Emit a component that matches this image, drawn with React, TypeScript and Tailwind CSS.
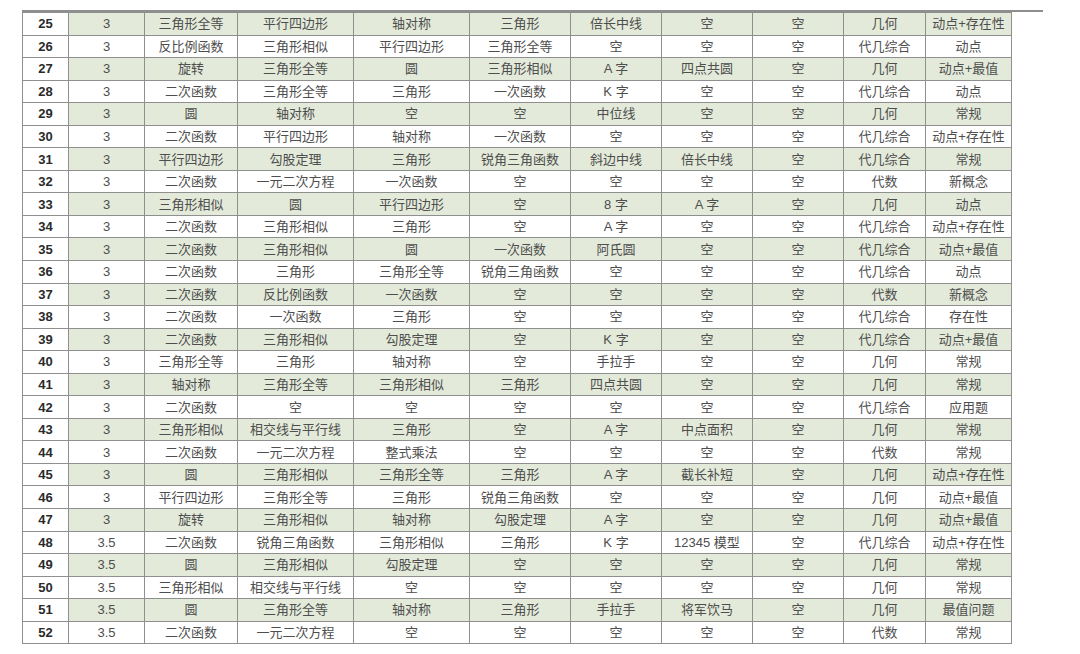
const rows: string[][] = [
  ['25', '3', '三角形全等', '平行四边形', '轴对称', '三角形', '倍长中线', '空', '空', '几何', '动点+存在性'],
  ['26', '3', '反比例函数', '三角形相似', '平行四边形', '三角形全等', '空', '空', '空', '代几综合', '动点'],
  ['27', '3', '旋转', '三角形全等', '圆', '三角形相似', 'A 字', '四点共圆', '空', '几何', '动点+最值'],
  ['28', '3', '二次函数', '三角形全等', '三角形', '一次函数', 'K 字', '空', '空', '代几综合', '动点'],
  ['29', '3', '圆', '轴对称', '空', '空', '中位线', '空', '空', '几何', '常规'],
  ['30', '3', '二次函数', '平行四边形', '轴对称', '一次函数', '空', '空', '空', '代几综合', '动点+存在性'],
  ['31', '3', '平行四边形', '勾股定理', '三角形', '锐角三角函数', '斜边中线', '倍长中线', '空', '代几综合', '常规'],
  ['32', '3', '二次函数', '一元二次方程', '一次函数', '空', '空', '空', '空', '代数', '新概念'],
  ['33', '3', '三角形相似', '圆', '平行四边形', '空', '8 字', 'A 字', '空', '几何', '动点'],
  ['34', '3', '二次函数', '三角形相似', '三角形', '空', 'A 字', '空', '空', '代几综合', '动点+存在性'],
  ['35', '3', '二次函数', '三角形相似', '圆', '一次函数', '阿氏圆', '空', '空', '代几综合', '动点+最值'],
  ['36', '3', '二次函数', '三角形', '三角形全等', '锐角三角函数', '空', '空', '空', '代几综合', '动点'],
  ['37', '3', '二次函数', '反比例函数', '一次函数', '空', '空', '空', '空', '代数', '新概念'],
  ['38', '3', '二次函数', '一次函数', '三角形', '空', '空', '空', '空', '代几综合', '存在性'],
  ['39', '3', '二次函数', '三角形相似', '勾股定理', '空', 'K 字', '空', '空', '代几综合', '动点+最值'],
  ['40', '3', '三角形全等', '三角形', '轴对称', '空', '手拉手', '空', '空', '几何', '常规'],
  ['41', '3', '轴对称', '三角形全等', '三角形相似', '三角形', '四点共圆', '空', '空', '几何', '常规'],
  ['42', '3', '二次函数', '空', '空', '空', '空', '空', '空', '代几综合', '应用题'],
  ['43', '3', '三角形相似', '相交线与平行线', '三角形', '空', 'A 字', '中点面积', '空', '几何', '常规'],
  ['44', '3', '二次函数', '一元二次方程', '整式乘法', '空', '空', '空', '空', '代数', '常规'],
  ['45', '3', '圆', '三角形相似', '三角形全等', '三角形', 'A 字', '截长补短', '空', '几何', '动点+存在性'],
  ['46', '3', '平行四边形', '三角形全等', '三角形', '锐角三角函数', '空', '空', '空', '几何', '动点+最值'],
  ['47', '3', '旋转', '三角形相似', '轴对称', '勾股定理', 'A 字', '空', '空', '几何', '动点+最值'],
  ['48', '3.5', '二次函数', '锐角三角函数', '三角形相似', '三角形', 'K 字', '12345 模型', '空', '代几综合', '动点+存在性'],
  ['49', '3.5', '圆', '三角形相似', '勾股定理', '空', '空', '空', '空', '几何', '常规'],
  ['50', '3.5', '三角形相似', '相交线与平行线', '空', '空', '空', '空', '空', '几何', '常规'],
  ['51', '3.5', '圆', '三角形全等', '轴对称', '三角形', '手拉手', '将军饮马', '空', '几何', '最值问题'],
  ['52', '3.5', '二次函数', '一元二次方程', '空', '空', '空', '空', '空', '代数', '常规'],
];

// column widths measured off the screenshot
const widths = [46, 76, 93, 116, 116, 101, 91, 91, 91, 82, 86];

export default function App() {
  return (
    <div className="w-[1080px] h-[654px] bg-white overflow-hidden pt-[10px] pl-[22px]">
      <div className="w-[1021px] h-[2px] bg-[#8e8e8e]" />
      <table
        className="table-fixed border-collapse w-[989px] text-[13px] text-[#4e4e4e]"
        style={{ fontFamily: '"Liberation Sans", "Noto Sans CJK SC", sans-serif' }}
      >
        <colgroup>
          {widths.map((w, i) => (
            <col key={i} style={{ width: w }} />
          ))}
        </colgroup>
        <tbody>
          {rows.map((row, r) => {
            const green = r % 2 === 0;
            return (
              <tr key={row[0]} className="h-[22.55px]">
                {row.map((cell, c) => (
                  <td
                    key={c}
                    className={
                      'border border-[#8f8f8f] text-center leading-none p-0 whitespace-nowrap ' +
                      (c === 0
                        ? 'bg-white font-bold text-[13px] text-[#2a2a2a] '
                        : green
                        ? 'bg-[#e3eada] '
                        : 'bg-white ') +
                      (c === 8 ? 'border-l-[#4a4a4a] ' : '')
                    }
                  >
                    {cell}
                  </td>
                ))}
              </tr>
            );
          })}
        </tbody>
      </table>
    </div>
  );
}
